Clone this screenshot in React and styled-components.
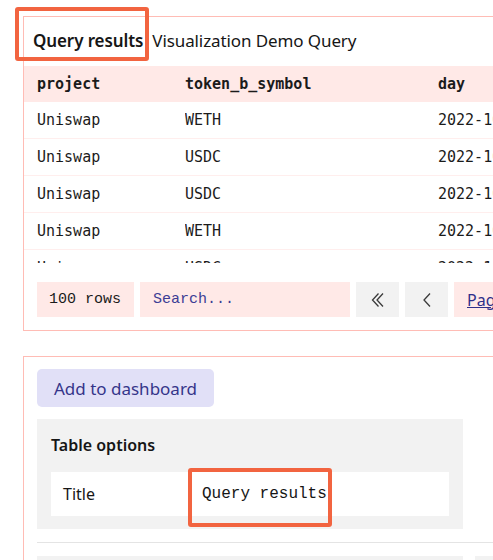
import React from "react";
import styled, { createGlobalStyle } from "styled-components";

const Global = createGlobalStyle`
  html, body { margin: 0; padding: 0; background: #fff; overflow: hidden; }
  body { font-family: "Noto Sans", "Open Sans", sans-serif; color: #161616; }
  * { box-sizing: border-box; }
`;

const Page = styled.div`
  width: 493px;
  height: 560px;
  overflow: hidden;
  padding: 16px 0 0 23px;
  display: flex;
  flex-direction: column;
  gap: 25px;
`;

const Panel = styled.section`
  width: 560px;
  flex-shrink: 0;
  border: 1px solid #ffbcb5;
  border-right: none;
`;

const TitleBar = styled.div`
  height: 49px;
  display: flex;
  align-items: center;
  padding-left: 9px;
  padding-bottom: 3px;
  gap: 9px;
  font-size: 17px;
  letter-spacing: -0.1px;
`;

const Highlighted = styled.span`
  position: relative;
  font-weight: 600;
`;

const Annot = styled.span`
  position: absolute;
  border: 4px solid #f26440;
  border-radius: 3px;
  pointer-events: none;
  left: ${(p) => p.$l}px;
  top: ${(p) => p.$t}px;
  width: ${(p) => p.$w}px;
  height: ${(p) => p.$h}px;
`;

const Plain = styled.span`
  font-weight: 400;
`;

const TableClip = styled.div`
  height: 197px;
  overflow: hidden;
`;

const Table = styled.div`
  display: grid;
  grid-template-columns: 161px 253px 1fr;
  font-family: "DejaVu Sans Mono", monospace;
  font-size: 15px;
`;

const Row = styled.div`
  display: contents;
`;

const Cell = styled.div`
  height: ${(p) => (p.$head ? 36 : 37)}px;
  display: flex;
  align-items: center;
  padding-left: ${(p) => (p.$first ? 13 : 0)}px;
  background: ${(p) => (p.$head ? "#ffe9e7" : "#fff")};
  font-weight: ${(p) => (p.$head ? 700 : 400)};
  border-bottom: ${(p) => (p.$head ? "none" : "1.5px solid #ffeeed")};
  white-space: nowrap;
  overflow: hidden;
  color: #1b1b1b;
`;

const Footer = styled.div`
  display: flex;
  gap: 6px;
  padding: 19px 0 13px 13px;
`;

const Chip = styled.div`
  height: 35px;
  display: flex;
  align-items: center;
  justify-content: ${(p) => (p.$center ? "center" : "flex-start")};
  width: ${(p) => p.$w}px;
  padding-left: ${(p) => p.$pl || 0}px;
  background: ${(p) => p.$bg || "#ffe9e7"};
  font-family: "Liberation Mono", monospace;
  font-size: 15px;
  color: ${(p) => p.$color || "#1b1b1b"};
  flex-shrink: 0;
`;

const PageLink = styled.span`
  font-family: "Noto Sans", sans-serif;
  font-size: 16px;
  text-decoration: underline;
  color: #2f2f8a;
`;

const Panel2 = styled(Panel)`
  padding: 12px 0 0 13px;
  flex: 1;
  border-bottom: none;
  display: flex;
  flex-direction: column;
  gap: 12px;
`;

const AddButton = styled.button`
  width: 177px;
  height: 38px;
  border: none;
  border-radius: 5px;
  background: #e1e0f7;
  color: #35358a;
  font-family: "Noto Sans", sans-serif;
  font-size: 17px;
  padding: 0;
  text-align: center;
`;

const Options = styled.div`
  width: 426px;
  background: #f2f2f2;
  padding: 14px 14px 13px 14px;
  display: flex;
  flex-direction: column;
  gap: 15px;
`;

const OptionsTitle = styled.div`
  font-weight: 600;
  font-size: 16px;
  height: 24px;
  display: flex;
  align-items: center;
`;

const OptionRow = styled.div`
  height: 44px;
  background: #fff;
  display: grid;
  grid-template-columns: 139px 1fr;
  align-items: center;
  padding-left: 12px;
  font-size: 16px;
`;

const Value = styled.span`
  position: relative;
  font-family: "Liberation Mono", monospace;
  font-size: 16px;
`;

const Divider = styled.div`
  border-top: 1px solid #e4e4e4;
  margin-top: 1px;
  padding-top: 13px;
  display: flex;
  gap: 12px;
`;

const GreyBlock = styled.div`
  width: ${(p) => p.$w}px;
  height: 30px;
  background: #f2f2f2;
  flex-shrink: 0;
`;

const Chevron = ({ double }) => (
  <svg width="14" height="16" viewBox="0 0 14 16" fill="none" stroke="#3a3a3a" strokeWidth="1.3">
    {double ? (
      <>
        <polyline points="7.5,1.5 1.5,8 7.5,14.5" />
        <polyline points="12,1.5 6,8 12,14.5" />
      </>
    ) : (
      <polyline points="10,1.5 4,8 10,14.5" />
    )}
  </svg>
);

const rows = [
  ["Uniswap", "WETH", "2022-10"],
  ["Uniswap", "USDC", "2022-10"],
  ["Uniswap", "USDC", "2022-10"],
  ["Uniswap", "WETH", "2022-10"],
  ["Uniswap", "USDC", "2022-10"],
];

export default function App() {
  return (
    <>
      <Global />
      <Page>
        <Panel>
          <TitleBar>
            <Highlighted>
              Query results
              <Annot $l={-18} $t={-22} $w={134} $h={54} />
            </Highlighted>
            <Plain>Visualization Demo Query</Plain>
          </TitleBar>
          <TableClip>
            <Table>
              <Row>
                <Cell $head $first>project</Cell>
                <Cell $head>token_b_symbol</Cell>
                <Cell $head>day</Cell>
              </Row>
              {rows.map((r, i) => (
                <Row key={i}>
                  <Cell $first>{r[0]}</Cell>
                  <Cell>{r[1]}</Cell>
                  <Cell>{r[2]}</Cell>
                </Row>
              ))}
            </Table>
          </TableClip>
          <Footer>
            <Chip $w={97} $pl={12}>100 rows</Chip>
            <Chip $w={210} $pl={13} $color="#3d3d95">Search...</Chip>
            <Chip $w={43} $center $bg="#f2f2f2"><Chevron double /></Chip>
            <Chip $w={43} $center $bg="#f2f2f2"><Chevron /></Chip>
            <Chip $w={90} $pl={13}><PageLink>Page 1</PageLink></Chip>
          </Footer>
        </Panel>
        <Panel2>
          <AddButton>Add to dashboard</AddButton>
          <Options>
            <OptionsTitle>Table options</OptionsTitle>
            <OptionRow>
              <span>Title</span>
              <Value>
                Query results
                <Annot $l={-14} $t={-17} $w={144} $h={59} />
              </Value>
            </OptionRow>
          </Options>
          <Divider>
            <GreyBlock $w={426} />
            <GreyBlock $w={60} />
          </Divider>
        </Panel2>
      </Page>
    </>
  );
}
